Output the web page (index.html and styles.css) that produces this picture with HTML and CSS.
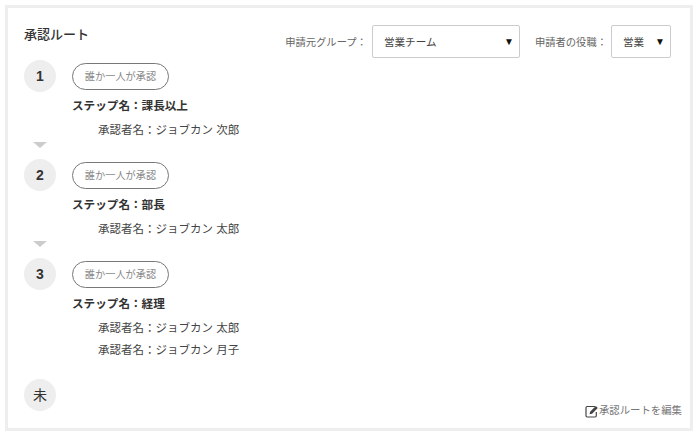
FILE: index.html
```html
<!DOCTYPE html>
<html lang="ja">
<head>
    <meta charset="UTF-8">
    <meta name="viewport" content="width=device-width, initial-scale=1.0">
    <title>承認ルート</title>
    <link rel="stylesheet" href="styles.css">
</head>
<body>
    <div class="panel">
        <div class="panel-head">
            <h1>承認ルート</h1>
            <div class="filters">
                <span class="filter-label">申請元グループ：</span>
                <div class="select select-group">営業チーム<span class="caret">▼</span></div>
                <span class="filter-label label-role">申請者の役職：</span>
                <div class="select select-role">営業<span class="caret">▼</span></div>
            </div>
        </div>

        <div class="step">
            <div class="num">1</div>
            <div class="step-body">
                <div class="pill">誰か一人が承認</div>
                <div class="step-name">ステップ名：課長以上</div>
                <div class="approver">承認者名：ジョブカン 次郎</div>
            </div>
        </div>
        <div class="arrow"></div>

        <div class="step">
            <div class="num">2</div>
            <div class="step-body">
                <div class="pill">誰か一人が承認</div>
                <div class="step-name">ステップ名：部長</div>
                <div class="approver">承認者名：ジョブカン 太郎</div>
            </div>
        </div>
        <div class="arrow"></div>

        <div class="step">
            <div class="num">3</div>
            <div class="step-body">
                <div class="pill">誰か一人が承認</div>
                <div class="step-name">ステップ名：経理</div>
                <div class="approver">承認者名：ジョブカン 太郎</div>
                <div class="approver">承認者名：ジョブカン 月子</div>
            </div>
        </div>

        <div class="panel-foot">
            <div class="num num-last">未</div>
            <a class="edit-link" href="#">
                <svg class="edit-icon" width="14" height="13" viewBox="0 0 14 13">
                    <path d="M10 1.500H2.200Q1 1.500 1 2.700v8.100q0 1.200 1.200 1.200h7.900q1.200 0 1.200-1.200V7" fill="none" stroke="#444" stroke-width="1.200"/>
                    <path d="M4.500 9.300l.6-2.600L10.800 1l2 2-5.700 5.700z" fill="#444"/>
                </svg>承認ルートを編集</a>
        </div>
    </div>
</body>
</html>
```
FILE: styles.css
```css
body {
    margin: 0;
    padding: 5px 6px 7px 5px;
    background-color: #ffffff;
    color: #333333;
    font-family: "Liberation Sans", "Noto Sans CJK JP", sans-serif;
}
.panel {
    box-sizing: border-box;
    height: 426px;
    padding: 15px 19px 0 16px;
    border: 3px solid #eeeeee;
}
.panel-head {
    display: flex;
    justify-content: space-between;
    height: 37px;
}
h1 {
    margin: 0;
    padding-top: 4px;
    font-size: 13px;
    line-height: 16px;
    font-weight: 500;
}
.filters {
    display: flex;
    align-items: center;
    height: 33px;
    margin-top: 2px;
    font-size: 10.3px;
    color: #666666;
}
.filter-label {
    margin-right: 5px;
}
.label-role {
    margin-left: 15px;
    margin-right: 4px;
}
.select {
    box-sizing: border-box;
    display: flex;
    justify-content: space-between;
    align-items: center;
    height: 33px;
    padding: 0 5px 0 11px;
    border: 1px solid #cccccc;
    border-radius: 2px;
    font-size: 10.6px;
    color: #444444;
}
.select-group {
    width: 148px;
}
.select-role {
    width: 60px;
}
.caret {
    font-size: 10px;
    color: #111111;
}
.step {
    display: flex;
    gap: 16px;
}
.num {
    flex: none;
    width: 32px;
    height: 32px;
    border-radius: 50%;
    background-color: #eeeeee;
    font-size: 14px;
    font-weight: bold;
    line-height: 32px;
    text-align: center;
}
.step-body {
    padding-top: 3px;
}
.pill {
    box-sizing: border-box;
    width: 97px;
    height: 27px;
    border: 1px solid #777777;
    border-radius: 14px;
    font-size: 10.2px;
    line-height: 25px;
    text-align: center;
    color: #888888;
}
.step-name {
    margin-top: 8px;
    margin-bottom: 8px;
    font-size: 11.6px;
    line-height: 16px;
    font-weight: bold;
}
.approver {
    margin-top: 6px;
    padding-left: 26px;
    font-size: 11.5px;
    line-height: 16px;
    color: #444444;
}
.arrow {
    width: 0;
    margin: 4px 0 11px 9px;
    border-top: 6px solid #cccccc;
    border-left: 7px solid transparent;
    border-right: 7px solid transparent;
}
.panel-foot {
    display: flex;
    justify-content: space-between;
    align-items: flex-end;
    margin-top: 21px;
    margin-right: -11px;
}
.num-last {
    font-weight: normal;
    font-size: 14px;
}
.edit-link {
    display: flex;
    align-items: center;
    margin-bottom: -7px;
    font-size: 10.4px;
    line-height: 14px;
    color: #777777;
    text-decoration: none;
}
```
